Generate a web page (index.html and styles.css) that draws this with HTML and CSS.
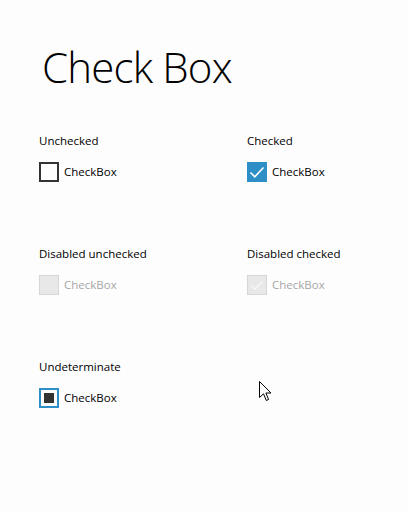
FILE: index.html
```html
<!DOCTYPE html>
<html lang="en">

<head>
    <title>Check Box</title>
    <meta charset="utf-8">
    <link rel="stylesheet" href="styles.css">
</head>

<body>
    <div class="page">
        <h1 class="page-title">Check Box</h1>

        <div class="demo-grid">
            <div class="demo-cell">
                <div class="demo-label">Unchecked</div>
                <div class="cb">
                    <span class="cb-box"></span>
                    <span class="cb-text">CheckBox</span>
                </div>
            </div>
            <div class="demo-cell">
                <div class="demo-label">Checked</div>
                <div class="cb">
                    <span class="cb-box cb-box--checked">
                        <svg viewBox="0 0 20 20" width="20" height="20"><path d="M3.5 10.5 L7.8 14.8 L16.5 5.5" fill="none" stroke="#fff" stroke-width="1.6"/></svg>
                    </span>
                    <span class="cb-text">CheckBox</span>
                </div>
            </div>

            <div class="demo-cell">
                <div class="demo-label">Disabled unchecked</div>
                <div class="cb cb--disabled">
                    <span class="cb-box"></span>
                    <span class="cb-text">CheckBox</span>
                </div>
            </div>
            <div class="demo-cell">
                <div class="demo-label">Disabled checked</div>
                <div class="cb cb--disabled">
                    <span class="cb-box">
                        <svg viewBox="0 0 20 20" width="20" height="20"><path d="M3.5 10.5 L7.8 14.8 L16.5 5.5" fill="none" stroke="#f7f7f7" stroke-width="1.6"/></svg>
                    </span>
                    <span class="cb-text">CheckBox</span>
                </div>
            </div>

            <div class="demo-cell">
                <div class="demo-label">Undeterminate</div>
                <div class="cb">
                    <span class="cb-box cb-box--mixed"><span class="cb-dot"></span></span>
                    <span class="cb-text">CheckBox</span>
                </div>
            </div>
        </div>
    </div>

    <svg class="cursor" width="13" height="21" viewBox="0 0 13 21">
        <path d="M0.5 0.5 L0.5 16.5 L4.5 12.8 L7.3 19.5 L9.6 18.5 L6.9 12 L12 12 Z" fill="#fff" stroke="#000" stroke-width="1" stroke-linejoin="miter"/>
    </svg>
</body>

</html>
```

FILE: styles.css
```css
body {
    margin: 0;
    background: #fdfdfd;
    font-family: "Segoe UI", "Open Sans", "Noto Sans", sans-serif;
    color: #000;
}

.page {
    padding: 39px 0 0 39px;
}

.page-title {
    margin: 0 0 38px 3px;
    font-size: 42px;
    font-weight: 300;
    line-height: 56px;
    letter-spacing: -0.8px;
}

.demo-grid {
    display: grid;
    grid-template-columns: 208px 1fr;
    row-gap: 64px;
}

.demo-label {
    font-size: 11.5px;
    line-height: 16px;
    margin-bottom: 13px;
}

.cb {
    display: flex;
    align-items: center;
}

.cb-box {
    box-sizing: border-box;
    width: 20px;
    height: 20px;
    border: 2px solid #333;
    display: flex;
    align-items: center;
    justify-content: center;
}

.cb-box--checked {
    border: none;
    background: #2d8fc6;
}

.cb-box--mixed {
    border-color: #2d8fc6;
}

.cb-dot {
    width: 10px;
    height: 10px;
    background: #333;
}

.cb-text {
    margin-left: 5px;
    font-size: 11.5px;
    line-height: 16px;
}

.cb--disabled {
    margin-top: 3px;
}

.cb--disabled .cb-box {
    border: 1px solid #d6d6d6;
    background: #e8e8e8;
}

.cb--disabled .cb-text {
    color: #a6a6a6;
}

.cursor {
    position: absolute;
    left: 259px;
    top: 381px;
}
```
